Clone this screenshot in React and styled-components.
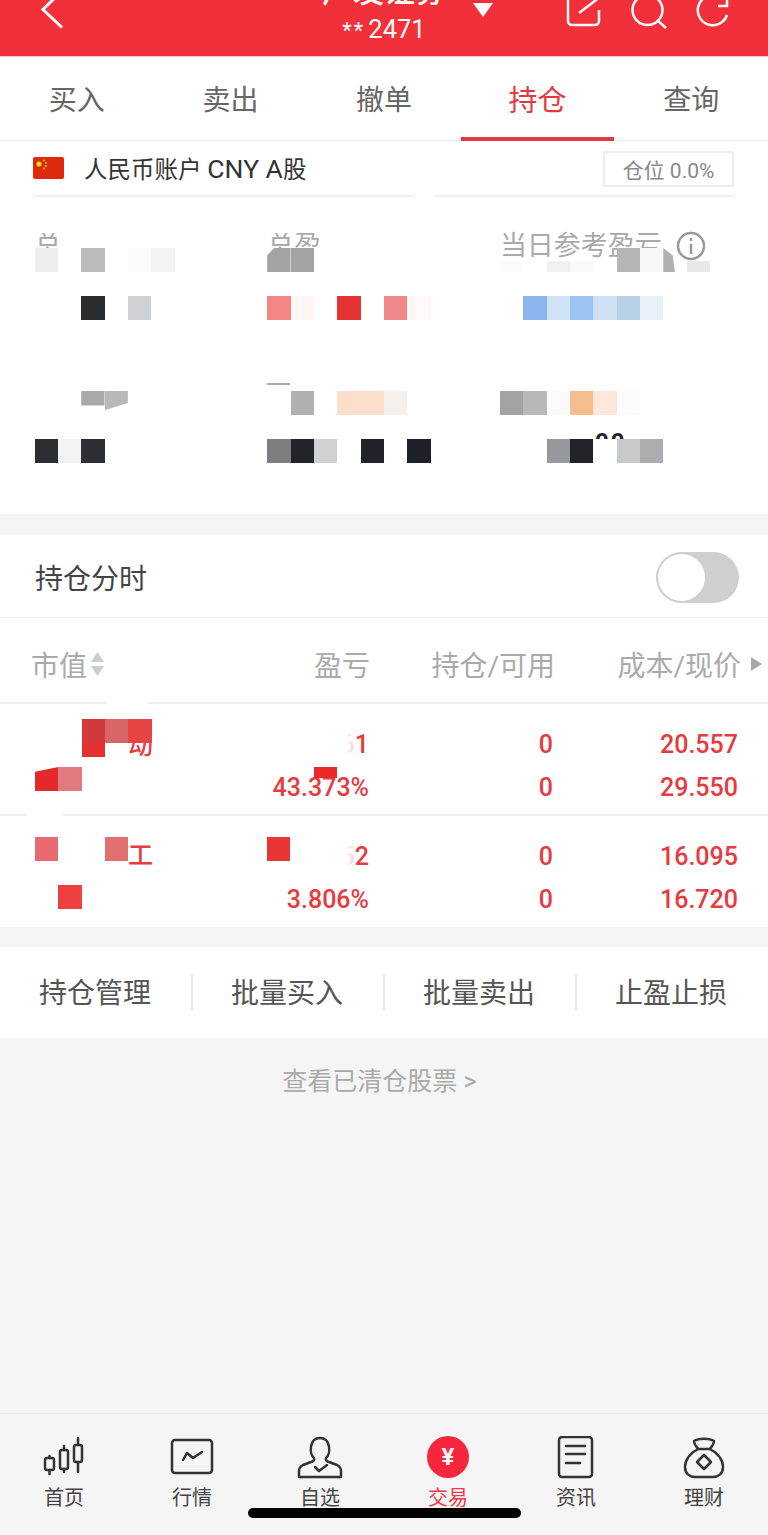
import styled, { createGlobalStyle } from "styled-components";

const GlobalStyle = createGlobalStyle`
  html, body { margin: 0; padding: 0; background: #f5f5f5; }
  * { box-sizing: border-box; }
  body { font-family: Roboto, "Noto Sans CJK SC", sans-serif; }
`;

const RED = "#e83a3f";
const CELL = 23.35;

const Page = styled.div`
  position: relative;
  width: 768px;
  height: 1535px;
  display: flex;
  flex-direction: column;
  overflow: hidden;
  background: #f5f5f5;
`;

const Header = styled.header`
  height: 57px;
  flex: none;
  display: grid;
  grid-template-columns: 1fr auto 1fr;
  background: #f23039;
  border-bottom: 1px solid #f3c9cb;
  overflow: hidden;
  color: #fff;
`;

const BackIcon = styled.svg`
  width: 30px;
  height: 30px;
  margin-left: 38px;
  overflow: visible;
`;

const TitleBlock = styled.div`
  position: relative;
  display: flex;
  flex-direction: column;
  align-items: center;
  margin-top: -28px;
`;

const Title = styled.div`
  font-size: 31px;
  line-height: 40px;
  font-weight: 500;
`;

const Account = styled.div`
  margin-top: 1px;
  font-size: 25.5px;
  line-height: 32px;
`;

const Stars = styled.span`
  font-size: 22px;
  margin-right: 3px;
  letter-spacing: 2px;
`;

const Caret = styled.svg`
  position: absolute;
  left: calc(100% + 27px);
  top: 31px;
  width: 20px;
  height: 14px;
`;

const HeaderIcons = styled.div`
  display: flex;
  justify-content: flex-end;
  gap: 31px;
  padding-right: 37px;
`;

const HeaderIcon = styled.svg`
  width: 34px;
  height: 30px;
  overflow: visible;
`;

const Tabs = styled.nav`
  height: 84px;
  flex: none;
  display: grid;
  grid-template-columns: repeat(5, 1fr);
  background: #fff;
  border-bottom: 1px solid #eee;
`;

const Tab = styled.div`
  display: flex;
  align-items: center;
  justify-content: center;
  padding-top: 1px;
  font-size: ${(p) => (p.$active ? 29 : 28)}px;
  color: ${(p) => (p.$active ? "#e43a3f" : "#666")};
  border-bottom: 4px solid ${(p) => (p.$active ? "#e03a3f" : "transparent")};
  margin-bottom: -1px;
`;

const Overview = styled.section`
  flex: none;
  height: 373px;
  background: #fff;
`;

const AccountRow = styled.div`
  height: 54px;
  display: flex;
  align-items: center;
  padding: 0 34px 0 33px;
`;

const Flag = styled.svg`
  width: 31px;
  height: 22px;
  flex: none;
`;

const AccountName = styled.div`
  margin-left: 20px;
  flex: 1;
  font-size: 23.5px;
  color: #333;
`;

const Latin = styled.span`
  font-size: 26.5px;
`;

const Pill = styled.div`
  width: 131px;
  height: 36px;
  margin-top: 2px;
  display: flex;
  align-items: center;
  justify-content: center;
  border: 2px solid #eee;
  font-size: 21px;
  color: #888;
`;

const Rule = styled.div`
  height: 2px;
  margin: 0 33px;
  background: linear-gradient(
    to right,
    #f0f0f0 0 382px,
    transparent 382px 402px,
    #f0f0f0 402px
  );
`;

const StatGrid = styled.div`
  display: grid;
  grid-template-columns: repeat(3, 232.7px);
  row-gap: 56px;
  padding: 36px 0 0 34.5px;
`;

const Stat = styled.div`
  display: flex;
  flex-direction: column;
`;

const StatLabel = styled.div`
  height: 15px;
  display: flex;
  align-items: flex-start;
  font-size: 27px;
  line-height: 27px;
  color: #aaa;
  overflow: ${(p) => (p.$clip ? "hidden" : "visible")};
`;

const LabelTick = styled.div`
  width: 23px;
  height: 2px;
  margin-top: 7px;
  background: #aaa;
`;

const InfoIcon = styled.svg`
  width: 30px;
  height: 30px;
  flex: none;
  margin: -2px 0 0 14px;
`;

const MosaicRow = styled.div`
  position: relative;
  display: flex;
  align-items: flex-end;
  height: 24px;
  margin-bottom: ${(p) => p.$gap || 0}px;
`;

const Cell = styled.div`
  position: relative;
  flex: none;
  width: ${CELL}px;
  height: ${(p) => (p.$short ? 11 : 24)}px;
  background: ${(p) => p.$c || "transparent"};
  clip-path: ${(p) => p.$clip || "none"};
`;

const Peek = styled.div`
  position: absolute;
  left: 95px;
  top: -6px;
  height: 6px;
  overflow: hidden;
  font-size: 24px;
  line-height: 24px;
  font-weight: 700;
  color: #222;
  letter-spacing: 2px;

  span {
    display: block;
    margin-top: -3px;
  }
`;

const Gap = styled.div`
  height: ${(p) => p.$h}px;
  flex: none;
`;

const ToggleRow = styled.div`
  height: 83px;
  flex: none;
  display: flex;
  align-items: center;
  justify-content: space-between;
  padding: 2px 29px 0 35px;
  background: #fff;
  border-bottom: 1px solid #eee;
  font-size: 28px;
  color: #444;
`;

const Toggle = styled.div`
  width: 83px;
  height: 51px;
  padding: 2px;
  border-radius: 26px;
  background: #cfcfcf;
`;

const Knob = styled.div`
  width: 47px;
  height: 47px;
  border-radius: 50%;
  background: #fff;
`;

const TableHead = styled.div`
  position: relative;
  height: 86px;
  flex: none;
  display: grid;
  grid-template-columns: 119px 220px 185px 186px 1fr;
  align-items: center;
  padding: 8px 0 0 31px;
  background: #fff;
  border-bottom: 2px solid #eee;
  font-size: 28px;
  color: #aaa;
`;

const HeadName = styled.div`
  display: flex;
  align-items: center;
  gap: 3px;
`;

const HeadValue = styled.div`
  text-align: right;
  white-space: nowrap;
`;

const SortIcon = styled.svg`
  width: 15px;
  height: 26px;
`;

const MoreIcon = styled.svg`
  width: 11px;
  height: 14px;
  margin-left: 10px;
`;

const Notch = styled.div`
  position: absolute;
  left: ${(p) => p.$left}px;
  bottom: -2px;
  width: ${(p) => p.$w}px;
  height: 2px;
  background: #fff;
`;

const HoldingRow = styled.div`
  position: relative;
  height: ${(p) => (p.$last ? 111 : 112)}px;
  flex: none;
  display: grid;
  grid-template-columns: 115px 219px 184px 185px;
  padding: 18.5px 0 0 35px;
  background: #fff;
  border-bottom: ${(p) => (p.$last ? "none" : "2px solid #eee")};
  color: ${RED};
`;

const NameCol = styled.div`
  margin-top: ${(p) => p.$top}px;
  width: 140px;
`;

const Glyph = styled.div`
  position: absolute;
  left: 93px;
  top: ${(p) => p.$top}px;
  font-size: 25px;
  line-height: 25px;
  font-weight: 500;
  color: ${RED};
`;

const NameBar = styled.div`
  position: absolute;
  left: ${CELL * 2}px;
  top: 24px;
  width: ${CELL}px;
  height: 14px;
  background: #e62f2f;
`;

const ValueCol = styled.div`
  display: flex;
  flex-direction: column;
`;

const Value = styled.div`
  position: relative;
  height: 43px;
  line-height: 43px;
  font-size: 25px;
  font-weight: 500;
  text-align: right;
`;

const TextMask = styled.div`
  position: absolute;
  top: 8px;
  right: 14px;
  width: 24px;
  height: 28px;
  background: linear-gradient(to right, #fff 60%, rgba(255, 255, 255, 0.75));
`;

const Patch = styled.div`
  position: absolute;
  top: ${(p) => p.$top}px;
  right: ${(p) => p.$right}px;
  width: ${CELL}px;
  height: ${(p) => p.$h}px;
  background: ${(p) => p.$c};
`;

const Actions = styled.div`
  height: 91px;
  flex: none;
  display: grid;
  grid-template-columns: repeat(4, 1fr);
  align-items: center;
  background: #fff;
`;

const Action = styled.div`
  height: 37px;
  margin-left: -1px;
  display: flex;
  align-items: center;
  justify-content: center;
  padding: 0 3px 3px 0;
  font-size: 28px;
  color: #555;
  border-left: 2px solid ${(p) => (p.$first ? "transparent" : "#e8e8e8")};
`;

const Body = styled.div`
  flex: 1;
  text-align: center;
  padding: 25px 9px 0 0;
  font-size: 25px;
  line-height: 38px;
  color: #aaa;
`;

const BottomNav = styled.nav`
  height: 122px;
  flex: none;
  display: grid;
  grid-template-columns: repeat(6, 128px);
  padding-top: 22px;
  background: #f5f5f5;
  border-top: 1px solid #ececec;
`;

const NavItem = styled.div`
  display: flex;
  flex-direction: column;
  align-items: center;
  font-size: 20px;
  line-height: 30px;
  color: ${(p) => (p.$active ? "#ee3a4c" : "#444")};
`;

const NavIcon = styled.svg`
  width: 48px;
  height: 46px;
  margin-bottom: 1px;
  fill: none;
  stroke: #333;
  stroke-width: 2.5;
  stroke-linejoin: round;
  stroke-linecap: round;
`;

const YuanBadge = styled.div`
  width: 42px;
  height: 42px;
  margin-bottom: 5px;
  display: flex;
  align-items: center;
  justify-content: center;
  border-radius: 50%;
  background: #f7263c;
  color: #fff;
  font-size: 24px;
  font-weight: 700;
`;

const HomeIndicator = styled.div`
  position: absolute;
  left: 248px;
  top: 1508px;
  width: 273px;
  height: 10px;
  border-radius: 5px;
  background: #000;
`;

const Mosaic = ({ cells, gap, children }) => (
  <MosaicRow $gap={gap}>
    {children}
    {cells.map((c, i) =>
      c && typeof c === "object" ? (
        <Cell key={i} $c={c.c} $short={c.short} $clip={c.clip} />
      ) : (
        <Cell key={i} $c={c} />
      )
    )}
  </MosaicRow>
);

const short = (c, clip) => ({ c, short: true, clip });
const _ = null;

const tabs = ["买入", "卖出", "撤单", "持仓", "查询"];
const actions = ["持仓管理", "批量买入", "批量卖出", "止盈止损"];

const App = () => {
  return (
    <Page>
      <GlobalStyle />
      <Header>
        <BackIcon viewBox="0 0 30 30" fill="none" stroke="#fff" strokeWidth="3">
          <path d="M24 -9L5 9.5L24 27.5" />
        </BackIcon>
        <TitleBlock>
          <Title>广发证券</Title>
          <Account>
            <Stars>**</Stars>2471
          </Account>
          <Caret viewBox="0 0 20 14">
            <path d="M0 0H20L10 14Z" fill="#fff" />
          </Caret>
        </TitleBlock>
        <HeaderIcons>
          <HeaderIcon viewBox="0 0 34 30" fill="none" stroke="#fff" strokeWidth="2.5">
            <path d="M1 -3V21a4 4 0 0 0 4 4H28a4 4 0 0 0 4 -4V10" />
            <path d="M12 13L33 -3" />
          </HeaderIcon>
          <HeaderIcon viewBox="0 0 34 30" fill="none" stroke="#fff" strokeWidth="2.5">
            <circle cx="15.5" cy="10" r="15" />
            <path d="M25 20L34 28" />
          </HeaderIcon>
          <HeaderIcon viewBox="0 0 34 30" fill="none" stroke="#fff" strokeWidth="2.5">
            <path d="M30 15A15 15 0 1 1 23 -3" />
            <path d="M30 -3V6H21" />
          </HeaderIcon>
        </HeaderIcons>
      </Header>

      <Tabs>
        {tabs.map((t) => (
          <Tab key={t} $active={t === "持仓"}>
            {t}
          </Tab>
        ))}
      </Tabs>

      <Overview>
        <AccountRow>
          <Flag viewBox="0 0 31 22">
            <rect width="31" height="22" rx="2" fill="#de2910" />
            <circle cx="6" cy="7" r="2.6" fill="#ffde00" />
            <circle cx="11" cy="3.5" r="0.9" fill="#ffde00" />
            <circle cx="13" cy="6" r="0.9" fill="#ffde00" />
            <circle cx="13" cy="9" r="0.9" fill="#ffde00" />
            <circle cx="11" cy="11.5" r="0.9" fill="#ffde00" />
          </Flag>
          <AccountName>
            人民币账户 <Latin>CNY A</Latin>股
          </AccountName>
          <Pill>仓位 0.0%</Pill>
        </AccountRow>
        <Rule />
        <StatGrid>
          <Stat>
            <StatLabel $clip>总</StatLabel>
            <Mosaic gap={24} cells={["#eeeeee", _, "#bbbbbb", _, "#fbfbfb", "#f3f3f3"]} />
            <Mosaic cells={[_, _, "#2a2c30", _, "#d0d1d3"]} />
          </Stat>
          <Stat>
            <StatLabel $clip>总盈</StatLabel>
            <Mosaic
              gap={24}
              cells={[
                { c: "#a3a3a3", clip: "polygon(0 30%, 30% 0, 100% 0, 100% 100%, 0 100%)" },
                "#a3a3a3",
              ]}
            />
            <Mosaic cells={["#f88686", "#fff6f6", _, "#e53333", _, "#ee8a8a", "#fff8f8"]} />
          </Stat>
          <Stat>
            <StatLabel>
              当日参考盈亏
              <InfoIcon viewBox="0 0 30 30" fill="none" stroke="#999" strokeWidth="2.5">
                <circle cx="15" cy="15" r="13" />
                <path d="M15 13V23" />
                <path d="M15 7V10" />
              </InfoIcon>
            </StatLabel>
            <Mosaic
              gap={24}
              cells={[
                short("#fbfbfb"),
                _,
                short("#f0f0f0"),
                short("#f9f9f9"),
                _,
                "#b5b5b5",
                "#f8f8f8",
                { c: "#b0b0b0", clip: "polygon(0 0, 40% 30%, 50% 100%, 0 100%)" },
                short("#e8e8e8"),
              ]}
            />
            <Mosaic cells={[_, "#8ab5ef", "#cfe2f6", "#9dc3f5", "#cfe0f6", "#b9d1e6", "#e6f2f7"]} />
          </Stat>

          <Stat>
            <StatLabel $clip />
            <Mosaic
              gap={24}
              cells={[
                _,
                _,
                { c: "#a9a9a9", clip: "polygon(0 0, 100% 0, 100% 60%, 0 60%)" },
                { c: "#b8b8b8", clip: "polygon(0 0, 100% 0, 100% 50%, 0 80%)" },
              ]}
            />
            <Mosaic cells={["#2b2d31", "#f3f3f3", "#2d2f34"]} />
          </Stat>
          <Stat>
            <StatLabel $clip>
              <LabelTick />
            </StatLabel>
            <Mosaic gap={24} cells={[_, "#b0b0b0", _, "#fbdfcc", "#fbdfcb", "#f6f1ee"]} />
            <Mosaic cells={["#7d7e82", "#202327", "#d0d1d3", _, "#1f2229", _, "#1e2129"]} />
          </Stat>
          <Stat>
            <StatLabel $clip />
            <Mosaic gap={24} cells={["#a3a3a3", "#b8b8b8", "#fafafa", "#f5bd8d", "#fde8d9", "#fcfcfc"]} />
            <Mosaic cells={[_, _, "#97989b", "#202327", _, "#c8c9cb", "#acadaf"]}>
              <Peek>
                <span>00</span>
              </Peek>
            </Mosaic>
          </Stat>
        </StatGrid>
      </Overview>

      <Gap $h={21} />

      <ToggleRow>
        持仓分时
        <Toggle>
          <Knob />
        </Toggle>
      </ToggleRow>

      <TableHead>
        <HeadName>
          市值
          <SortIcon viewBox="0 0 15 26">
            <path d="M7.5 1L14 11H1Z" fill="#ccc" />
            <path d="M1 15H14L7.5 25Z" fill="#ccc" />
          </SortIcon>
        </HeadName>
        <HeadValue>盈亏</HeadValue>
        <HeadValue>持仓/可用</HeadValue>
        <HeadValue>成本/现价</HeadValue>
        <MoreIcon viewBox="0 0 11 14">
          <path d="M0 0L11 7L0 14Z" fill="#aaa" />
        </MoreIcon>
        <Notch $left={107} $w={41} />
      </TableHead>

      <HoldingRow>
        <NameCol $top={-3.5}>
          <Mosaic gap={24} cells={[_, _, "#d03a3c", "#d86668", "#e84444"]}>
            <Glyph $top={14}>动</Glyph>
            <NameBar />
          </Mosaic>
          <Mosaic
            cells={[{ c: "#e22a2a", clip: "polygon(0 20%, 100% 0, 100% 100%, 0 100%)" }, "#e07a80"]}
          />
        </NameCol>
        <ValueCol>
          <Value>
            61
            <TextMask />
          </Value>
          <Value>
            43.373%
            <Patch $top={1.5} $right={32} $h={11} $c="#ea2a2a" />
          </Value>
        </ValueCol>
        <ValueCol>
          <Value>0</Value>
          <Value>0</Value>
        </ValueCol>
        <ValueCol>
          <Value>20.557</Value>
          <Value>29.550</Value>
        </ValueCol>
        <Notch $left={27} $w={36} />
      </HoldingRow>

      <HoldingRow $last>
        <NameCol $top={2.5}>
          <Mosaic gap={24} cells={["#e86a70", _, _, "#e07070"]}>
            <Glyph $top={6}>工</Glyph>
          </Mosaic>
          <Mosaic cells={[_, "#ee4040"]} />
        </NameCol>
        <ValueCol>
          <Value>
            52
            <TextMask />
            <Patch $top={2.5} $right={79} $h={24} $c="#e93535" />
          </Value>
          <Value>3.806%</Value>
        </ValueCol>
        <ValueCol>
          <Value>0</Value>
          <Value>0</Value>
        </ValueCol>
        <ValueCol>
          <Value>16.095</Value>
          <Value>16.720</Value>
        </ValueCol>
      </HoldingRow>

      <Gap $h={20} />

      <Actions>
        {actions.map((a, i) => (
          <Action key={a} $first={i === 0}>
            {a}
          </Action>
        ))}
      </Actions>

      <Body>查看已清仓股票 &gt;</Body>

      <BottomNav>
        <NavItem>
          <NavIcon viewBox="0 0 48 46">
            <rect x="5" y="22" width="9" height="12" rx="2" />
            <path d="M9.5 20V22M9.5 34V38" />
            <rect x="20" y="14" width="8" height="19" rx="2" />
            <path d="M24 10V14M24 33V36" />
            <rect x="34" y="9" width="8" height="17" rx="2" />
            <path d="M38 2V9M38 26V36" />
          </NavIcon>
          首页
        </NavItem>
        <NavItem>
          <NavIcon viewBox="0 0 48 46">
            <rect x="4" y="4" width="40" height="33" rx="3" />
            <path d="M15 24L19 17L25 22L34 16" />
          </NavIcon>
          行情
        </NavItem>
        <NavItem>
          <NavIcon viewBox="0 0 48 46">
            <path d="M18 22C13 18 13 2 24 2C35 2 35 18 30 22q-1 3 3 4l8 3q4 2 4 6v6H3v-6q0-4 4-6l8-3q4-1 3-4Z" />
            <path d="M19 31L23 35L31 29" />
          </NavIcon>
          自选
        </NavItem>
        <NavItem $active>
          <YuanBadge>¥</YuanBadge>
          交易
        </NavItem>
        <NavItem>
          <NavIcon viewBox="0 0 48 46">
            <rect x="7" y="1" width="33" height="40" rx="3" />
            <path d="M14 10H33M14 18H33M14 27H28" />
          </NavIcon>
          资讯
        </NavItem>
        <NavItem>
          <NavIcon viewBox="0 0 48 46">
            <path d="M14 5C18 2 30 2 34 5C34 9 31 11 30 13H18C17 11 14 9 14 5Z" />
            <path d="M18 13C10 17 5 24 5 31C5 38 10 41 15 41H33C38 41 43 38 43 31C43 24 38 17 30 13" />
            <path d="M24 19L31 26L24 33L17 26Z" />
          </NavIcon>
          理财
        </NavItem>
      </BottomNav>

      <HomeIndicator />
    </Page>
  );
};

export default App;
